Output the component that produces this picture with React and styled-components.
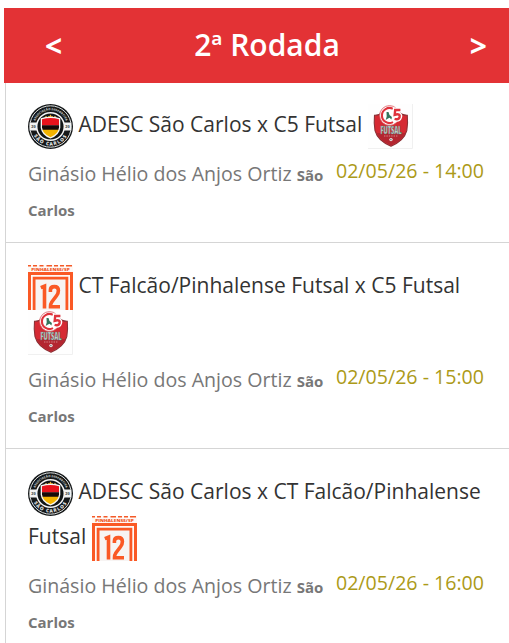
import React from "react";
import styled, { createGlobalStyle } from "styled-components";

const teams = {
  adesc: { name: "ADESC São Carlos", badge: AdescBadge },
  c5: { name: "C5 Futsal", badge: C5Badge },
  falcao: { name: "CT Falcão/Pinhalense Futsal", badge: FalcaoBadge },
};

const matches = [
  { home: "adesc", away: "c5", date: "02/05/26 - 14:00" },
  { home: "falcao", away: "c5", date: "02/05/26 - 15:00" },
  { home: "adesc", away: "falcao", date: "02/05/26 - 16:00" },
];

const App = () => {
  return (
    <>
      <GlobalStyle />
      <Round>
        <Header>
          <Arrow>&lt;</Arrow>
          <h2>2ª Rodada</h2>
          <Arrow>&gt;</Arrow>
        </Header>
        <List>
          {matches.map((match) => (
            <Match key={match.date} {...match} />
          ))}
        </List>
      </Round>
    </>
  );
};

const Match = ({ home, away, date }) => {
  const HomeBadge = teams[home].badge;
  const AwayBadge = teams[away].badge;
  return (
    <Row>
      <Teams>
        <HomeBadge /> {teams[home].name} x {teams[away].name} <AwayBadge />
      </Teams>
      <Info>
        <Venue>
          Ginásio Hélio dos Anjos Ortiz <strong>São Carlos</strong>
        </Venue>
        <MatchDate>{date}</MatchDate>
      </Info>
    </Row>
  );
};

function AdescBadge() {
  return (
    <Badge viewBox="0 0 45 45">
      <defs>
        <path id="adesc-top" d="M6.2 22.5a16.3 16.3 0 0 1 32.6 0" />
        <path id="adesc-bottom" d="M3.4 22.5a19.1 19.1 0 0 0 38.2 0" />
        <clipPath id="adesc-shield">
          <path d="M14 15.2q8.5-2.6 17 0v8.3q-.8 6.5-8.5 9.8-7.7-3.3-8.5-9.8z" />
        </clipPath>
      </defs>
      <circle cx="22.5" cy="22.5" r="22.5" fill="#16191a" />
      <circle cx="22.5" cy="22.5" r="20.7" fill="none" stroke="#d9dddd" strokeWidth="1" />
      <path d="M1.8 18.5h41.4v8H1.8z" fill="#f2f3f3" />
      <circle cx="22.5" cy="22.5" r="13.8" fill="#111516" stroke="#f5f5f5" strokeWidth="1.5" />
      <BadgeText fontSize="3" fill="#b9bebe">
        <textPath href="#adesc-top" startOffset="50%" textAnchor="middle">
          ASSOCIAÇÃO DESPORTIVA
        </textPath>
      </BadgeText>
      <BadgeText fontSize="4.8" fill="#e0e2e2" letterSpacing="1">
        <textPath href="#adesc-bottom" startOffset="50%" textAnchor="middle">
          SÃO CARLOS
        </textPath>
      </BadgeText>
      <BadgeText x="5.6" y="24" fontSize="3.8" fill="#555b5d" textAnchor="middle">
        20
      </BadgeText>
      <BadgeText x="39.4" y="24" fontSize="3.8" fill="#555b5d" textAnchor="middle">
        20
      </BadgeText>
      <path d="M16.8 13.4l1.2-1.2 1.2 1.2M25.8 13.4l1.2-1.2 1.2 1.2" stroke="#cfa84c" fill="none" />
      <path d="M19.7 13.9l.6-1.9 1 .4 1.2-1.8 1.2 1.8 1-.4.6 1.9z" fill="#f7b52b" />
      <path d="M12.7 14.2q9.8-2.7 19.6 0v9.5q-.8 7.4-9.8 10.9-9-3.5-9.8-10.9z" fill="#f7f7f4" />
      <g clipPath="url(#adesc-shield)">
        <path d="M13 13h19v8.4H13z" fill="#e8131b" />
        <path d="M13 21.2h19v4.7H13z" fill="#160a08" />
        <path d="M13 25.8h19V35H13z" fill="#f3b300" />
      </g>
    </Badge>
  );
}

function C5Badge() {
  return (
    <Badge viewBox="0 0 45 45">
      <path d="M0 0h45v45H0z" fill="#fefefe" />
      <path d="M44.5 0v44.5H0" fill="none" stroke="#f0f0f0" />
      <path
        d="M6.5 11.2q5 .2 8.5-3.2l7.5-5 8 5q3.5 3.3 8.8 3.2.8 8.5-.5 15.5-2.8 10.3-15.8 15.5Q9.8 37 7 26.7q-1.3-7-.5-15.5z"
        fill="#d62a33"
        stroke="#8b3136"
        strokeWidth="1.1"
      />
      <path d="M8.4 29q5.5 9 14.6 12.2Q32.4 38 37.5 29z" fill="#b32630" />
      <circle cx="21.5" cy="11.5" r="9.9" fill="#fff" stroke="#dc5960" strokeWidth="0.8" />
      <path
        d="M25 4.9a7.5 7.5 0 1 0 0 13.2"
        fill="none"
        stroke="#df333c"
        strokeWidth="2.1"
      />
      <path
        d="M32.4 6h-5.2l-.5 4.8c4-1.3 5.6.1 4.9 2.3-.6 2-2.6 2.5-5 1.8"
        fill="none"
        stroke="#fff"
        strokeWidth="5"
      />
      <path
        d="M32.4 6h-5.2l-.5 4.8c4-1.3 5.6.1 4.9 2.3-.6 2-2.6 2.5-5 1.8"
        fill="none"
        stroke="#df333c"
        strokeWidth="2.4"
      />
      <path d="M18.5 7.9l2 .2 1 2.8 2.4 2-.5 2.5-1.8-1.6-1.6.8-2.3 1.4 1-3.6z" fill="#32755c" />
      <BadgeText
        transform="translate(23 29.6) scale(0.56 1)"
        fontSize="10"
        textAnchor="middle"
        fill="#d4dfdc"
        stroke="#537570"
        strokeWidth="0.6"
      >
        FUTSAL
      </BadgeText>
      <path d="M16 32h14" stroke="#d48589" strokeDasharray="1.4 1" />
      <circle cx="23" cy="35.6" r="1.7" fill="#e8e8e8" />
      <path d="M22 35.2h1.6l-.5 1.4z" fill="#333" />
    </Badge>
  );
}

function FalcaoBadge() {
  return (
    <Badge viewBox="0 0 45 45">
      <path d="M0 0h45v45H0z" fill="#fff8f5" />
      <path
        d="M0 .7h3M5 .7h4M11.5 .7h4M18.5 .7h5.5M26 .7h4M32 .7h4M38 .7h6"
        stroke="#f45a28"
        strokeWidth="1.4"
      />
      <BadgeText
        transform="translate(22.5 6) scale(1.2 1)"
        fontSize="4"
        textAnchor="middle"
        fill="#ef5524"
      >
        PINHALENSE/SP
      </BadgeText>
      <path d="M1.5 45V8.4h42V45" fill="none" stroke="#fa5925" strokeWidth="3" />
      <path d="M6.1 45V13.2h32.8V45" fill="#f7f4f3" stroke="#fa5925" strokeWidth="2.8" />
      <path d="M12.8 22.6l3.7-1.4V43.5" fill="none" stroke="#fa5925" strokeWidth="3.6" />
      <path
        d="M22.4 27v-1.8q0-3.6 4-3.6t4 3.8q0 2.8-1.9 5.4l-4.7 6.2q-1.3 1.8-1.3 4.8h9.5"
        fill="none"
        stroke="#fa5925"
        strokeWidth="3.6"
      />
    </Badge>
  );
}

const GlobalStyle = createGlobalStyle`
  * {
    box-sizing: border-box;
  }
  body {
    margin: 0;
    background: #fff;
    font-family: "Open Sans", sans-serif;
    overflow: hidden;
  }
`;

const Round = styled.section`
  padding: 8px 0 0 4px;
`;

const Header = styled.header`
  display: flex;
  align-items: center;
  justify-content: space-between;
  height: 75px;
  padding: 0 22px 0 41px;
  background: #e33235;
  color: #fff;
  h2 {
    margin: 0;
    padding-left: 2px;
    font-size: 30px;
    font-weight: 600;
    line-height: 73px;
    padding-bottom: 2px;
  }
`;

const Arrow = styled.span`
  font-size: 30px;
  font-weight: 700;
`;

const List = styled.div`
  margin-left: 1px;
  border-left: 1px solid #d5d5d5;
`;

const Row = styled.article`
  padding: 22px 24px 16px 22px;
  border-bottom: 1px solid #d5d5d5;
  &:first-child {
    padding-top: 21px;
  }
`;

const Teams = styled.div`
  color: #333;
  font-size: 21px;
  line-height: 30px;
`;

const Badge = styled.svg`
  display: inline-block;
  width: 45px;
  height: 45px;
  vertical-align: middle;
`;

const BadgeText = styled.text`
  font-family: "Open Sans", sans-serif;
  font-weight: 800;
`;

const Info = styled.div`
  display: grid;
  grid-template-columns: 1fr auto;
  column-gap: 8px;
  padding: 7px 1px 0 0;
`;

const Venue = styled.div`
  color: #777;
  font-size: 19.6px;
  line-height: 35px;
  strong {
    font-size: 15px;
    font-weight: 700;
    line-height: 1;
  }
`;

const MatchDate = styled.time`
  color: #ac9a18;
  font-size: 19.6px;
  line-height: 30px;
`;

export default App;
